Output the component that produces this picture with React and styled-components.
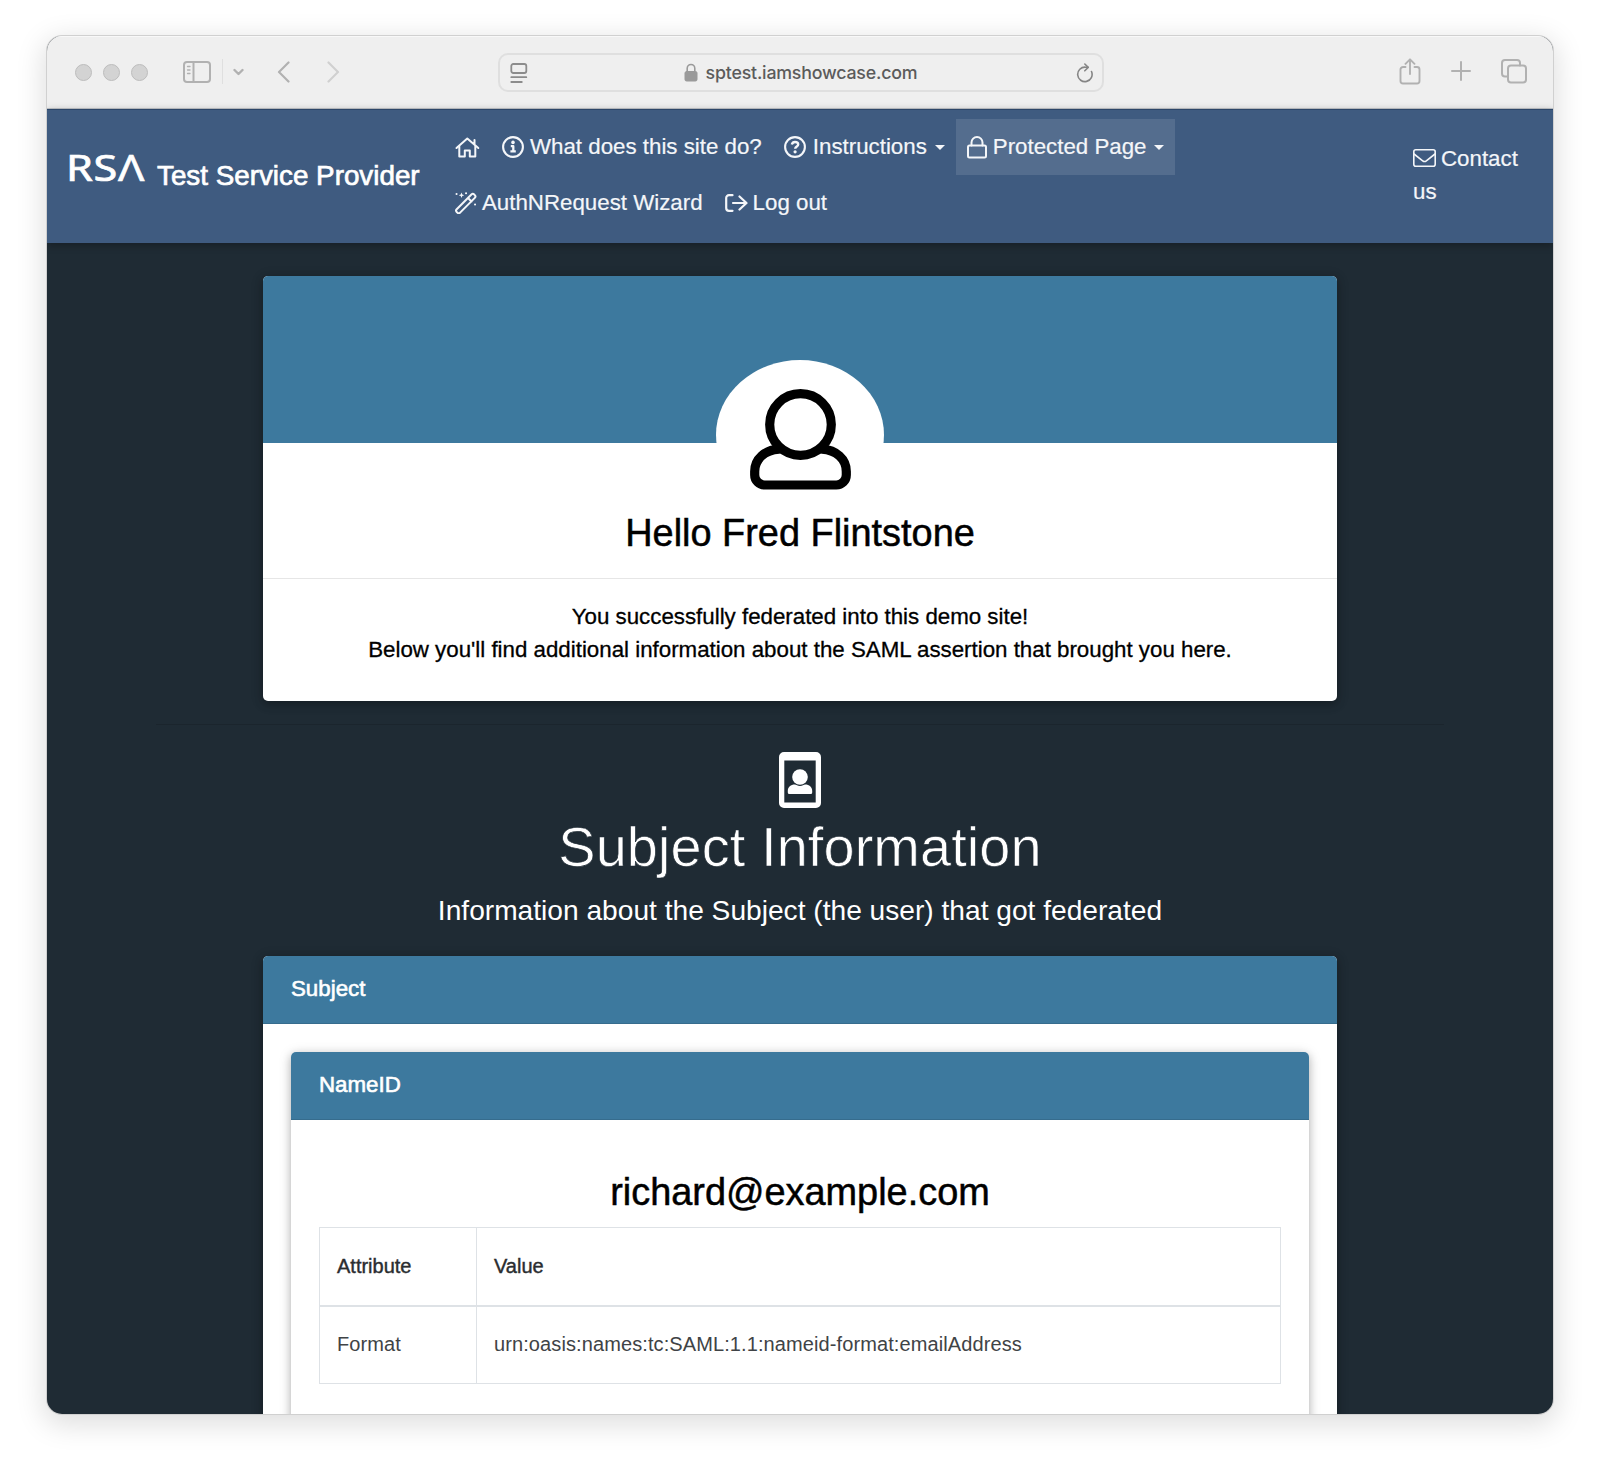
import React from "react";
import styled, { createGlobalStyle } from "styled-components";

const INK = "#1f2b34";
const NAVY = "#3f5b80";
const TEAL = "#3d799e";

const Global = createGlobalStyle`
  *, *::before, *::after { box-sizing: border-box; }
  body {
    margin: 0;
    background: #fff;
    font-family: "Liberation Sans", Arial, sans-serif;
    font-size: 22.3px;
    line-height: 33.5px;
    color: #000;
  }
  h1, h2, h3, p { margin: 0; font-weight: 400; }
  svg { display: block; flex: none; }
`;

const Desktop = styled.div`
  height: 1472px;
  padding: 36px 47px 0;
  overflow: hidden;
`;

const Window = styled.div`
  display: flex;
  flex-direction: column;
  width: 1506px;
  height: 1378px;
  border-radius: 15px;
  overflow: hidden;
  background: ${INK};
  box-shadow: 0 0 0 1px #d0d0d0, 0 7px 28px 4px rgba(0, 0, 0, 0.13);
`;

/* ---------- browser chrome ---------- */

const Toolbar = styled.header`
  display: flex;
  align-items: center;
  flex: none;
  height: 73px;
  padding: 0 26px 0 28px;
  background: #efefef;
  border-top: 1px solid #f8f8f8;
  border-bottom: 1px solid #c2c6ca;
  color: #b1b1b1;
`;

const Lights = styled.div`
  display: flex;
  gap: 11px;
  width: 108px;
`;

const Light = styled.i`
  width: 17px;
  height: 17px;
  border-radius: 50%;
  background: #d3d3d3;
  border: 1px solid #bdbdbd;
`;

const LeftTools = styled.div`
  display: flex;
  align-items: center;
  width: 315px;
  padding-bottom: 2px;
`;

const Rule = styled.span`
  width: 1px;
  height: 25px;
  margin: 0 10px 0 11px;
  background: #dfdfdf;
`;

const BackForward = styled.div`
  display: flex;
  gap: 37px;
  margin-left: 33px;
`;

const AddressBar = styled.div`
  display: grid;
  grid-template-columns: 18px 1fr 18px;
  align-items: center;
  width: 606px;
  height: 39px;
  padding: 0 8px 0 10px;
  border: 2px solid #dfdfdf;
  border-radius: 10px;
`;

const Address = styled.div`
  display: flex;
  align-items: center;
  justify-content: center;
  gap: 8px;
  padding-right: 3px;
  font-family: Inter, Roboto, sans-serif;
  font-size: 17.8px;
  line-height: 24px;
  font-weight: 500;
  letter-spacing: -0.2px;
  color: #5b5b5b;
`;

const RightTools = styled.div`
  display: flex;
  align-items: center;
  gap: 30px;
  margin-left: auto;
  padding-bottom: 3px;
`;

/* ---------- site navigation ---------- */

const Navbar = styled.nav`
  display: flex;
  align-items: center;
  flex: none;
  height: 134px;
  padding: 0 0 3px 21px;
  background: ${NAVY};
  border-top: 1px solid #2c4668;
  box-shadow: 0 2px 8px rgba(0, 0, 0, 0.3);
  color: #fff;
  z-index: 1;
`;

const Brand = styled.a`
  display: flex;
  align-items: baseline;
  width: 376px;
  padding-bottom: 5px;
  white-space: nowrap;
  font-size: 27.8px;
  -webkit-text-stroke: 0.7px #fff;
`;

const Logo = styled.span`
  width: 89px;
  height: 40px;
  font-family: "Noto Sans", sans-serif;
  font-size: 36px;
  line-height: 40px;
  letter-spacing: 0.6px;
  transform: translate(-2px, -4px) scaleX(1.2);
  transform-origin: left center;
`;

const Links = styled.div`
  display: flex;
  flex-wrap: wrap;
  width: 940px;
`;

const LinkItem = styled.a`
  display: flex;
  align-items: center;
  height: 55.8px;
  padding: 0 11px;
  gap: ${(p) => p.$gap || 6}px;
  white-space: nowrap;
  color: #f4f6f9;
  -webkit-text-stroke: 0.2px #f4f6f9;
  background: ${(p) => (p.$active ? "rgba(255,255,255,0.11)" : "transparent")};
`;

const Caret = styled.i`
  border: 5.5px solid transparent;
  border-top-color: currentColor;
  border-bottom-width: 0;
  margin-left: 1px;
`;

const Contact = styled.a`
  width: 120px;
  margin-left: 29px;
  color: #f4f6f9;
  -webkit-text-stroke: 0.2px #f4f6f9;

  svg {
    display: inline-block;
    margin-right: 5px;
    vertical-align: -1px;
  }
`;

/* ---------- page ---------- */

const Page = styled.main`
  display: flex;
  flex-direction: column;
  align-items: center;
  padding-top: 33px;
`;

const Card = styled.section`
  flex: none;
  width: ${(p) => p.$width || "1074px"};
  height: ${(p) => p.$height || "auto"};
  border-radius: 5px;
  overflow: hidden;
  background: #fff;
  box-shadow: 0 3px 8px rgba(0, 0, 0, 0.22), 0 2px 14px rgba(0, 0, 0, 0.14);
`;

const Banner = styled.div`
  height: 167px;
  background: ${TEAL};
`;

const Avatar = styled.div`
  display: flex;
  justify-content: center;
  width: 168px;
  height: 150px;
  margin: -83.500px auto 0;
  padding-top: 29px;
  border-radius: 50%;
  background: #fff;
`;

const Title = styled.h2`
  font-size: 37.9px;
  line-height: 46px;
  text-align: center;
  -webkit-text-stroke: 0.5px #000;
`;

const Greeting = styled.div`
  padding-bottom: 22px;
  border-bottom: 1px solid #e6e6e6;
`;

const Message = styled.p`
  height: 122px;
  padding-top: 21px;
  text-align: center;
  -webkit-text-stroke: 0.3px #000;
`;

const Divider = styled.div`
  width: 1288px;
  height: 1px;
  margin: 23px 0 26.500px;
  background: #1b252d;
`;

const SectionTitle = styled.h1`
  margin-top: 5.500px;
  font-size: 55.9px;
  line-height: 67px;
  letter-spacing: 0.1px;
  color: #fff;
  -webkit-text-stroke: 0.7px ${INK};
`;

const Lead = styled.p`
  margin: 10px 0 24px;
  font-size: 28.15px;
  line-height: 42px;
  color: #fff;
`;

const CardHeader = styled.h3`
  height: 68px;
  padding: 16px 28px 0;
  background: ${TEAL};
  border-bottom: 1px solid #366c8d;
  font-size: 22.3px;
  color: #fff;
  -webkit-text-stroke: 0.6px #fff;
`;

const CardBody = styled.div`
  padding: ${(p) => p.$padding};
`;

const Table = styled.table`
  width: 962px;
  margin-top: 12px;
  border-collapse: collapse;
  table-layout: fixed;
  font-size: 20px;
  line-height: 30px;
  color: #2a2d30;
`;

const Cell = styled.td`
  width: ${(p) => p.$width || "auto"};
  height: 78px;
  padding: 0 17px;
  border: 1px solid #dee2e6;
  ${(p) =>
    p.$head
      ? "border-bottom: 2px solid #dee2e6; -webkit-text-stroke: 0.4px #2a2d30;"
      : "padding-bottom: 1px; color: #404346; letter-spacing: 0.1px;"}
`;

/* ---------- drawings ---------- */

const Svg = ({ w, h, sw = 2, children, ...rest }) => (
  <svg
    width={w}
    height={h}
    viewBox={`0 0 ${w} ${h}`}
    fill="none"
    stroke="currentColor"
    strokeWidth={sw}
    strokeLinecap="round"
    strokeLinejoin="round"
    {...rest}
  >
    {children}
  </svg>
);

const SidebarIcon = () => (
  <Svg w={28} h={22}>
    <rect x="1" y="1" width="26" height="20" rx="3" />
    <path d="M10.5 1v20" />
    <path d="M4.500 5.500h2.500M4.500 9h2.500M4.500 12.500h2.500" strokeWidth="1.3" />
  </Svg>
);

const ChevronDown = () => (
  <Svg w={11} h={8} sw={2.4}>
    <path d="M1.500 2l4 4 4-4" />
  </Svg>
);

const BackIcon = () => (
  <Svg w={13} h={22} sw={2.2}>
    <path d="M11.500 1.500L2 11l9.500 9.500" />
  </Svg>
);

const ForwardIcon = () => (
  <Svg w={13} h={22} sw={2.2} stroke="#d0d0d0">
    <path d="M1.500 1.500L11 11l-9.500 9.500" />
  </Svg>
);

const ReaderIcon = () => (
  <Svg w={18} h={20} sw={1.8} stroke="#8c8c8c">
    <rect x="1.300" y="1" width="15" height="9" rx="2" />
    <path d="M1.300 14.200h15M1.300 19h10.500" />
  </Svg>
);

const AddressLock = () => (
  <Svg w={14} h={19} stroke="#9a9a9a">
    <rect x="1" y="8.500" width="12" height="9.500" rx="1.500" fill="#9a9a9a" strokeWidth="1" />
    <path d="M3.200 8.500V5.500a3.800 4 0 0 1 7.600 0v3" strokeWidth="1.600" />
  </Svg>
);

const ReloadIcon = () => (
  <Svg w={18} h={20} sw={1.6} stroke="#858585">
    <path d="M15.500 8.500a7.200 7.200 0 1 1-6-4.300h2.500" />
    <path d="M8.800 1l3.400 3.400-3.400 3.400" />
  </Svg>
);

const ShareIcon = () => (
  <Svg w={22} h={27} sw={1.9}>
    <path d="M6.500 9H4a2.500 2.500 0 0 0-2.500 2.500V23A2.500 2.500 0 0 0 4 25.500h14a2.500 2.500 0 0 0 2.500-2.500V11.500A2.500 2.500 0 0 0 18 9h-2.500" />
    <path d="M11 16V1.500M6.500 5.800L11 1.300l4.500 4.500" />
  </Svg>
);

const PlusIcon = () => (
  <Svg w={20} h={20}>
    <path d="M10 1v18M1 10h18" />
  </Svg>
);

const TabsIcon = () => (
  <Svg w={26} h={25}>
    <rect x="7" y="6.500" width="18" height="17" rx="3" />
    <path d="M7 17.500H4a3 3 0 0 1-3-3V4a3 3 0 0 1 3-3h12a3 3 0 0 1 3 3v2.500" />
  </Svg>
);

const HomeIcon = () => (
  <Svg w={25} h={21}>
    <path d="M1.500 11L12.300 1.500 23.300 11M19.500 3v4.500" />
    <path d="M4.300 9.500V19.500h5.500v-6h5v6h5.500V9.500" />
  </Svg>
);

const InfoIcon = () => (
  <Svg w={22} h={22} sw={2.1}>
    <circle cx="11" cy="11" r="9.900" />
    <circle cx="11" cy="6.400" r="1.800" fill="currentColor" stroke="none" />
    <path d="M8.800 10.200H11.300V15.300M8.400 15.400h5.400" strokeWidth="2.300" strokeLinecap="butt" />
  </Svg>
);

const HelpIcon = () => (
  <Svg w={22} h={22} sw={2.1}>
    <circle cx="11" cy="11" r="9.900" />
    <path d="M7.800 8.500C8.300 6.800 9.600 6 11 6c1.700 0 3.200 1 3.200 2.500 0 1.900-3 2-3 4.200" strokeWidth="2.400" strokeLinecap="butt" />
    <circle cx="11.100" cy="15.800" r="1.600" fill="currentColor" stroke="none" />
  </Svg>
);

const LockIcon = () => (
  <Svg w={20} h={23}>
    <rect x="1" y="9.500" width="18" height="12" rx="1.500" />
    <path d="M4.500 9.500V6.500a5.500 5.500 0 0 1 11 0V9.500" />
  </Svg>
);

const WandIcon = () => (
  <Svg w={22} h={22} sw={2}>
    <path d="M1.700 17.200L16.400 2.500a2 2 0 0 1 2.800 0l.6.600a2 2 0 0 1 0 2.800L5.100 20.600a2 2 0 0 1-2.800 0l-.6-.6a2 2 0 0 1 0-2.800zM13 6l3.500 3.500" />
    <path d="M6.500 .5l.8 2 2 .8-2 .8-.8 2-.8-2-2-.8 2-.8z" fill="currentColor" stroke="none" />
    <path d="M1.500 2h.1M11 1.200h.1M20 12.500h.1" />
  </Svg>
);

const LogoutIcon = () => (
  <Svg w={23} h={18} sw={2.2}>
    <path d="M7.500 1.200H4a2.800 2.800 0 0 0-2.800 2.800v10A2.800 2.800 0 0 0 4 16.800h3.500" />
    <path d="M8 9h13M14.500 2.500L21.500 9 14.500 15.500" />
  </Svg>
);

const MailIcon = () => (
  <Svg w={23} h={18} sw={1.6}>
    <rect x="0.800" y="0.800" width="21.400" height="16.400" rx="2" />
    <path d="M1 5l8.700 6.800a3 3 0 0 0 3.600 0L22 5" />
  </Svg>
);

const UserIcon = () => (
  <Svg w={101} h={101} sw={9.2}>
    <path d="M29 60.200C15 61 4.700 70 4.700 82.500v3.500a10 10 0 0 0 10 10h71.600a10 10 0 0 0 10-10v-3.500C96.300 70 86 61 72 60.200" />
    <circle cx="50.500" cy="35.500" r="30.800" fill="#fff" />
  </Svg>
);

const IdBadgeIcon = () => (
  <svg width="42" height="56" viewBox="0 0 42 56" fill="#fff">
    <path
      fillRule="evenodd"
      d="M5 0h32a5 5 0 0 1 5 5v46a5 5 0 0 1-5 5H5a5 5 0 0 1-5-5V5a5 5 0 0 1 5-5zM5.300 8.500v42h31.400v-42z"
    />
    <circle cx="21" cy="25" r="7.800" />
    <path d="M8.800 40.500v-1.500c0-4 3-6.500 7-6.500 1.500 0 2.700 1.500 5.200 1.500s3.700-1.500 5.200-1.500c4 0 7 2.500 7 6.500v1.500a1.500 1.500 0 0 1-1.500 1.500H10.300a1.500 1.500 0 0 1-1.500-1.500z" />
  </svg>
);

export default function App() {
  return (
    <Desktop>
      <Global />
      <Window>
        <Toolbar>
          <Lights>
            <Light />
            <Light />
            <Light />
          </Lights>
          <LeftTools>
            <SidebarIcon />
            <Rule />
            <ChevronDown />
            <BackForward>
              <BackIcon />
              <ForwardIcon />
            </BackForward>
          </LeftTools>
          <AddressBar>
            <ReaderIcon />
            <Address>
              <AddressLock />
              sptest.iamshowcase.com
            </Address>
            <ReloadIcon />
          </AddressBar>
          <RightTools>
            <ShareIcon />
            <PlusIcon />
            <TabsIcon />
          </RightTools>
        </Toolbar>

        <Navbar>
          <Brand>
            <Logo>RSΛ</Logo>
            Test Service Provider
          </Brand>
          <Links>
            <LinkItem>
              <HomeIcon />
            </LinkItem>
            <LinkItem>
              <InfoIcon />
              What does this site do?
            </LinkItem>
            <LinkItem $gap={7}>
              <HelpIcon />
              Instructions
              <Caret />
            </LinkItem>
            <LinkItem $active>
              <LockIcon />
              Protected Page
              <Caret />
            </LinkItem>
            <LinkItem $gap={5}>
              <WandIcon />
              AuthNRequest Wizard
            </LinkItem>
            <LinkItem $gap={5}>
              <LogoutIcon />
              Log out
            </LinkItem>
          </Links>
          <Contact>
            <MailIcon />
            Contact us
          </Contact>
        </Navbar>

        <Page>
          <Card $height="425px">
            <Banner />
            <Avatar>
              <UserIcon />
            </Avatar>
            <Greeting>
              <Title>Hello Fred Flintstone</Title>
            </Greeting>
            <Message>
              You successfully federated into this demo site!
              <br />
              Below you'll find additional information about the SAML assertion that brought you here.
            </Message>
          </Card>

          <Divider />

          <IdBadgeIcon />
          <SectionTitle>Subject Information</SectionTitle>
          <Lead>Information about the Subject (the user) that got federated</Lead>

          <Card $height="600px">
            <CardHeader>Subject</CardHeader>
            <CardBody $padding="28px 28px">
              <Card $width="1018px" $height="500px">
                <CardHeader>NameID</CardHeader>
                <CardBody $padding="49px 28px">
                  <Title>richard@example.com</Title>
                  <Table>
                    <tbody>
                      <tr>
                        <Cell $head $width="157px">Attribute</Cell>
                        <Cell $head>Value</Cell>
                      </tr>
                      <tr>
                        <Cell>Format</Cell>
                        <Cell>urn:oasis:names:tc:SAML:1.1:nameid-format:emailAddress</Cell>
                      </tr>
                    </tbody>
                  </Table>
                </CardBody>
              </Card>
            </CardBody>
          </Card>
        </Page>
      </Window>
    </Desktop>
  );
}
